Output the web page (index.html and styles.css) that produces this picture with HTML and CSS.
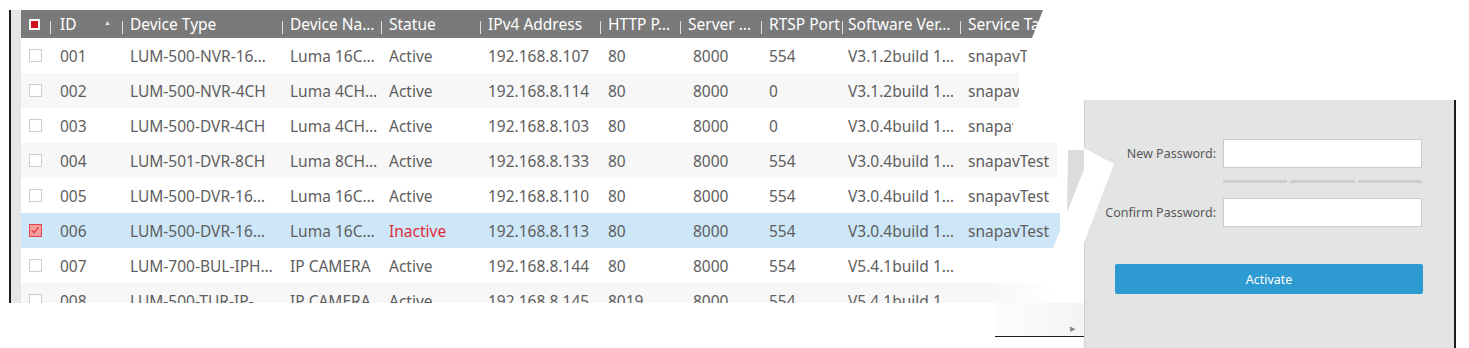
FILE: index.html
```html
<!DOCTYPE html>
<html>
<head>
<meta charset="utf-8">
<link rel="stylesheet" href="styles.css">
</head>
<body>
<div class="page">
  <div class="frame">
    <div class="strip"></div>
    <div class="table">
      <div class="row head">
        <div class="c chk"><span class="hbox"></span></div>
        <div class="c sep idh"><span>ID</span><span class="sort">▲</span></div>
        <div class="c sep">Device Type</div>
        <div class="c sep">Device Na…</div>
        <div class="c sep">Statue</div>
        <div class="c sep">IPv4 Address</div>
        <div class="c sep">HTTP P…</div>
        <div class="c sep">Server …</div>
        <div class="c sep">RTSP Port</div>
        <div class="c sep sw">Software Ver…</div>
        <div class="c sep">Service Ta</div>
      </div>
      <div class="row">
        <div class="c chk"><span class="box"></span></div>
        <div class="c id">001</div><div class="c">LUM-500-NVR-16…</div><div class="c">Luma 16C…</div><div class="c">Active</div><div class="c">192.168.8.107</div><div class="c">80</div><div class="c srv">8000</div><div class="c">554</div><div class="c">V3.1.2build 1…</div><div class="c">snapavTest</div>
      </div>
      <div class="row alt">
        <div class="c chk"><span class="box"></span></div>
        <div class="c id">002</div><div class="c">LUM-500-NVR-4CH</div><div class="c">Luma 4CH…</div><div class="c">Active</div><div class="c">192.168.8.114</div><div class="c">80</div><div class="c srv">8000</div><div class="c">0</div><div class="c">V3.1.2build 1…</div><div class="c">snapavTest</div>
      </div>
      <div class="row">
        <div class="c chk"><span class="box"></span></div>
        <div class="c id">003</div><div class="c">LUM-500-DVR-4CH</div><div class="c">Luma 4CH…</div><div class="c">Active</div><div class="c">192.168.8.103</div><div class="c">80</div><div class="c srv">8000</div><div class="c">0</div><div class="c">V3.0.4build 1…</div><div class="c">snapavTest</div>
      </div>
      <div class="row alt">
        <div class="c chk"><span class="box"></span></div>
        <div class="c id">004</div><div class="c">LUM-501-DVR-8CH</div><div class="c">Luma 8CH…</div><div class="c">Active</div><div class="c">192.168.8.133</div><div class="c">80</div><div class="c srv">8000</div><div class="c">554</div><div class="c">V3.0.4build 1…</div><div class="c">snapavTest</div>
      </div>
      <div class="row">
        <div class="c chk"><span class="box"></span></div>
        <div class="c id">005</div><div class="c">LUM-500-DVR-16…</div><div class="c">Luma 16C…</div><div class="c">Active</div><div class="c">192.168.8.110</div><div class="c">80</div><div class="c srv">8000</div><div class="c">554</div><div class="c">V3.0.4build 1…</div><div class="c">snapavTest</div>
      </div>
      <div class="row sel">
        <div class="c chk"><span class="box on"><svg viewBox="0 0 12 12" width="12" height="12"><path d="M2.6 6.2 L5 8.6 L9.6 3.2" fill="none" stroke="#d8323c" stroke-width="1.1"/></svg></span></div>
        <div class="c id">006</div><div class="c">LUM-500-DVR-16…</div><div class="c">Luma 16C…</div><div class="c bad">Inactive</div><div class="c">192.168.8.113</div><div class="c">80</div><div class="c srv">8000</div><div class="c">554</div><div class="c">V3.0.4build 1…</div><div class="c">snapavTest</div>
      </div>
      <div class="row">
        <div class="c chk"><span class="box"></span></div>
        <div class="c id">007</div><div class="c">LUM-700-BUL-IPH…</div><div class="c">IP CAMERA</div><div class="c">Active</div><div class="c">192.168.8.144</div><div class="c">80</div><div class="c srv">8000</div><div class="c">554</div><div class="c">V5.4.1build 1…</div><div class="c"></div>
      </div>
      <div class="row alt">
        <div class="c chk"><span class="box"></span></div>
        <div class="c id">008</div><div class="c">LUM-500-TUR-IP-…</div><div class="c">IP CAMERA</div><div class="c">Active</div><div class="c">192.168.8.145</div><div class="c">8019</div><div class="c srv">8000</div><div class="c">554</div><div class="c">V5.4.1build 1…</div><div class="c"></div>
      </div>
    </div>
  </div>

  <svg class="tear" width="1469" height="348" viewBox="0 0 1469 348">
    <defs>
      <linearGradient id="fade" x1="0" y1="0" x2="1" y2="0">
        <stop offset="0" stop-color="#fff" stop-opacity="0"/>
        <stop offset="1" stop-color="#fff" stop-opacity="1"/>
      </linearGradient>
    </defs>
    <polygon fill="#fff" points="1046,0 1084,0 1084,148 1057,148 1057,143 1013,143 1013,108 1019,108 1019,73 1027,73 1027,38 1032,38 1043,10"/>
    <rect x="990" y="248" width="63" height="55" fill="url(#fade)"/>
    <rect x="1053" y="248" width="31" height="55" fill="#fff"/>
  </svg>

  <div class="foot"><span class="arrow">▸</span></div>

  <div class="panel">
    <div class="field">
      <label class="lbl">New Password:</label>
      <div class="input"></div>
    </div>
    <div class="meter"><span></span><span></span><span></span></div>
    <div class="field">
      <label class="lbl">Confirm Password:</label>
      <div class="input"></div>
    </div>
    <div class="btn">Activate</div>
  </div>

  <svg class="tear top" width="1469" height="348" viewBox="0 0 1469 348">
    <rect x="1057" y="148" width="11" height="32" fill="#fff"/>
    <polygon fill="#dcdcdc" points="1068,150 1084,150 1084,170 1067,213"/>
    <polygon fill="#fff" points="1084,148 1114,164 1082,248 1053,248 1067,213 1084,170"/>
  </svg>
</div>
</body>
</html>
```
FILE: styles.css
```css
html, body {
  margin: 0;
  padding: 0;
  background: #fff;
}
.page {
  position: relative;
  width: 1469px;
  height: 348px;
  overflow: hidden;
  padding: 10px 0 0 9px;
  box-sizing: border-box;
  font-family: "Noto Sans", "Open Sans", sans-serif;
}
.frame {
  display: flex;
  height: 293px;
  overflow: hidden;
  border-left: 2px solid #1c1c1c;
  width: 1051px;
}
.strip {
  width: 10px;
  flex: none;
  background: #e6e6e6;
}
.table {
  flex: none;
  width: 1039px;
  display: flex;
  flex-direction: column;
}
.row {
  display: grid;
  grid-template-columns: 29px 72px 160px 99px 99px 120px 80px 81px 79px 120px 100px;
  height: 35px;
  align-items: center;
  background: #fff;
  color: #5e5e5e;
  font-size: 15.5px;
  flex: none;
}
.row.alt { background: #f7f7f7; }
.row.sel { background: #cde7f8; }
.row.head {
  height: 28px;
  background: #7a7a7a;
  color: #fff;
}
.c {
  white-space: nowrap;
  overflow: visible;
  padding-left: 8px;
  display: flex;
  align-items: center;
}
.c.chk {
  padding-left: 8px;
}
.c.id { padding-left: 10px; }
.c.srv { padding-left: 13px; }
.head .c.sep {
  position: relative;
  padding-left: 8px;
}
.head .c.sep::before {
  content: "";
  position: absolute;
  left: 0;
  top: 8px;
  width: 1px;
  height: 13px;
  background: #e0e0e0;
}
.head .c.idh {
  padding-left: 10px;
  justify-content: space-between;
  padding-right: 11px;
}
.head .c.sw::before { left: 2px; }
.sort {
  font-size: 7px;
  color: #e6e6e6;
  margin-top: -3px;
}
.hbox {
  width: 7px;
  height: 7px;
  background: #d0101e;
  border: 2px solid #fff;
  display: block;
}
.box {
  width: 11px;
  height: 11px;
  border: 1px solid #cdcdcd;
  background: #fff;
  display: block;
  position: relative;
}
.box.on {
  background: #f59c9c;
  border-color: #e0454d;
}
.box svg {
  position: absolute;
  left: -1px;
  top: -1px;
}
.bad { color: #e02b3a; }

.tear {
  position: absolute;
  left: 0;
  top: 0;
  pointer-events: none;
}
.foot {
  position: absolute;
  left: 995px;
  top: 303px;
  width: 89px;
  height: 33px;
  background: linear-gradient(90deg, #fdfdfd, #f4f4f4);
  border-bottom: 1px solid #1c1c1c;
  box-sizing: content-box;
  display: flex;
  justify-content: flex-end;
  align-items: flex-end;
}
.arrow {
  color: #8a8a8a;
  font-size: 11px;
  line-height: 1;
  margin: 0 8px 3px 0;
}
.panel {
  position: absolute;
  left: 1084px;
  top: 100px;
  width: 369px;
  height: 235px;
  background: #e3e4e4;
  border-left: 1px solid #cfcfcf;
  border-right: 2px solid #1c1c1c;
  border-bottom: 2px solid #1c1c1c;
  display: flex;
  flex-direction: column;
  padding: 38px 0 0 0;
  box-sizing: content-box;
  font-family: "Noto Sans", "Open Sans", sans-serif;
}
.field {
  display: flex;
  align-items: center;
  height: 30px;
}
.lbl {
  width: 131px;
  text-align: right;
  font-size: 12.5px;
  color: #585858;
  padding-right: 7px;
  flex: none;
}
.input {
  width: 197px;
  height: 27px;
  background: #fff;
  border: 1px solid #cccccc;
}
.meter {
  display: flex;
  gap: 3px;
  margin: 12px 0 14px 138px;
  width: 199px;
}
.meter span {
  flex: 1;
  height: 3px;
  background: #cdcdcd;
}
.btn {
  margin: 37px 0 0 30px;
  width: 308px;
  height: 30px;
  background: #2e9ad2;
  color: #fff;
  font-size: 12.5px;
  border-radius: 2px;
  display: flex;
  align-items: center;
  justify-content: center;
}
```
